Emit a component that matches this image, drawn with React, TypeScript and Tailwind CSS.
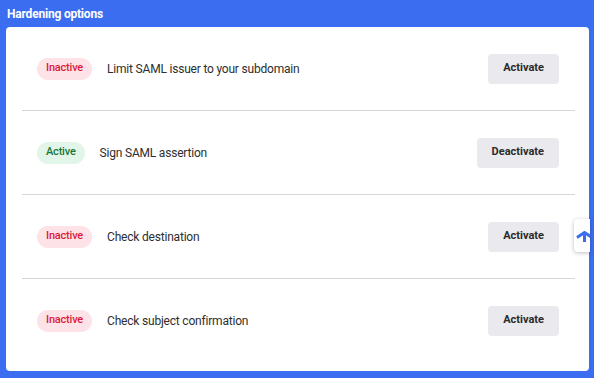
const options = [
  { active: false, label: "Limit SAML issuer to your subdomain" },
  { active: true, label: "Sign SAML assertion" },
  { active: false, label: "Check destination" },
  { active: false, label: "Check subject confirmation" },
];

function StatusBadge({ active }: { active: boolean }) {
  return active ? (
    <span className="inline-flex h-[22px] items-center rounded-full bg-[#e2f5e9] px-[9px] text-[11px] font-medium tracking-[-0.2px] text-[#17753a]">
      Active
    </span>
  ) : (
    <span className="inline-flex h-[22px] items-center rounded-full bg-[#fde3e7] px-[9px] text-[11px] font-medium tracking-[-0.2px] text-[#e0193a]">
      Inactive
    </span>
  );
}

export default function App() {
  return (
    <div
      className="relative h-[378px] w-[594px] overflow-hidden bg-[#3a6def] px-[6px] pt-[7px]"
      style={{ fontFamily: "Roboto, 'Noto Sans', sans-serif" }}
    >
      <h2 className="pl-[1px] text-[12px] font-bold leading-[15px] tracking-[-0.2px] text-white">Hardening options</h2>

      <div className="mt-[5px] w-[583px] rounded-[4px] bg-white pb-[9px] pl-4 pr-[14px]">
        {options.map((opt, i) => (
          <div
            key={opt.label}
            className={`flex items-center px-[15px] ${i < options.length - 1 ? "h-[84px] border-b border-[#d6d6d6]" : "h-[83px]"}`}
          >
            <StatusBadge active={opt.active} />
            <span className="ml-[15px] text-[12px] tracking-[-0.2px] text-[#2e2e2e]">{opt.label}</span>
            <button className="ml-auto mr-px h-[30px] rounded-[4px] bg-[#e9e9ee] px-[15px] text-[11px] font-bold text-[#2b2b2b]">
              {opt.active ? "Deactivate" : "Activate"}
            </button>
          </div>
        ))}
      </div>

      {/* scroll-to-top button, partly hidden at the right edge */}
      <div className="absolute left-[574px] top-[219px] h-[33px] w-[16px] overflow-hidden rounded-l-[4px] bg-white shadow-[0_1px_4px_rgba(0,0,0,0.25)]">
        <svg className="absolute left-[1px] top-[12px]" width="16" height="11" viewBox="0 0 16 11" fill="none">
          <path d="M2 6.5 L9.5 1.5 L17 6.5" stroke="#3a6def" strokeWidth="3" strokeLinejoin="round" />
          <path d="M9.5 2 V11" stroke="#3a6def" strokeWidth="3" />
        </svg>
      </div>
    </div>
  );
}
